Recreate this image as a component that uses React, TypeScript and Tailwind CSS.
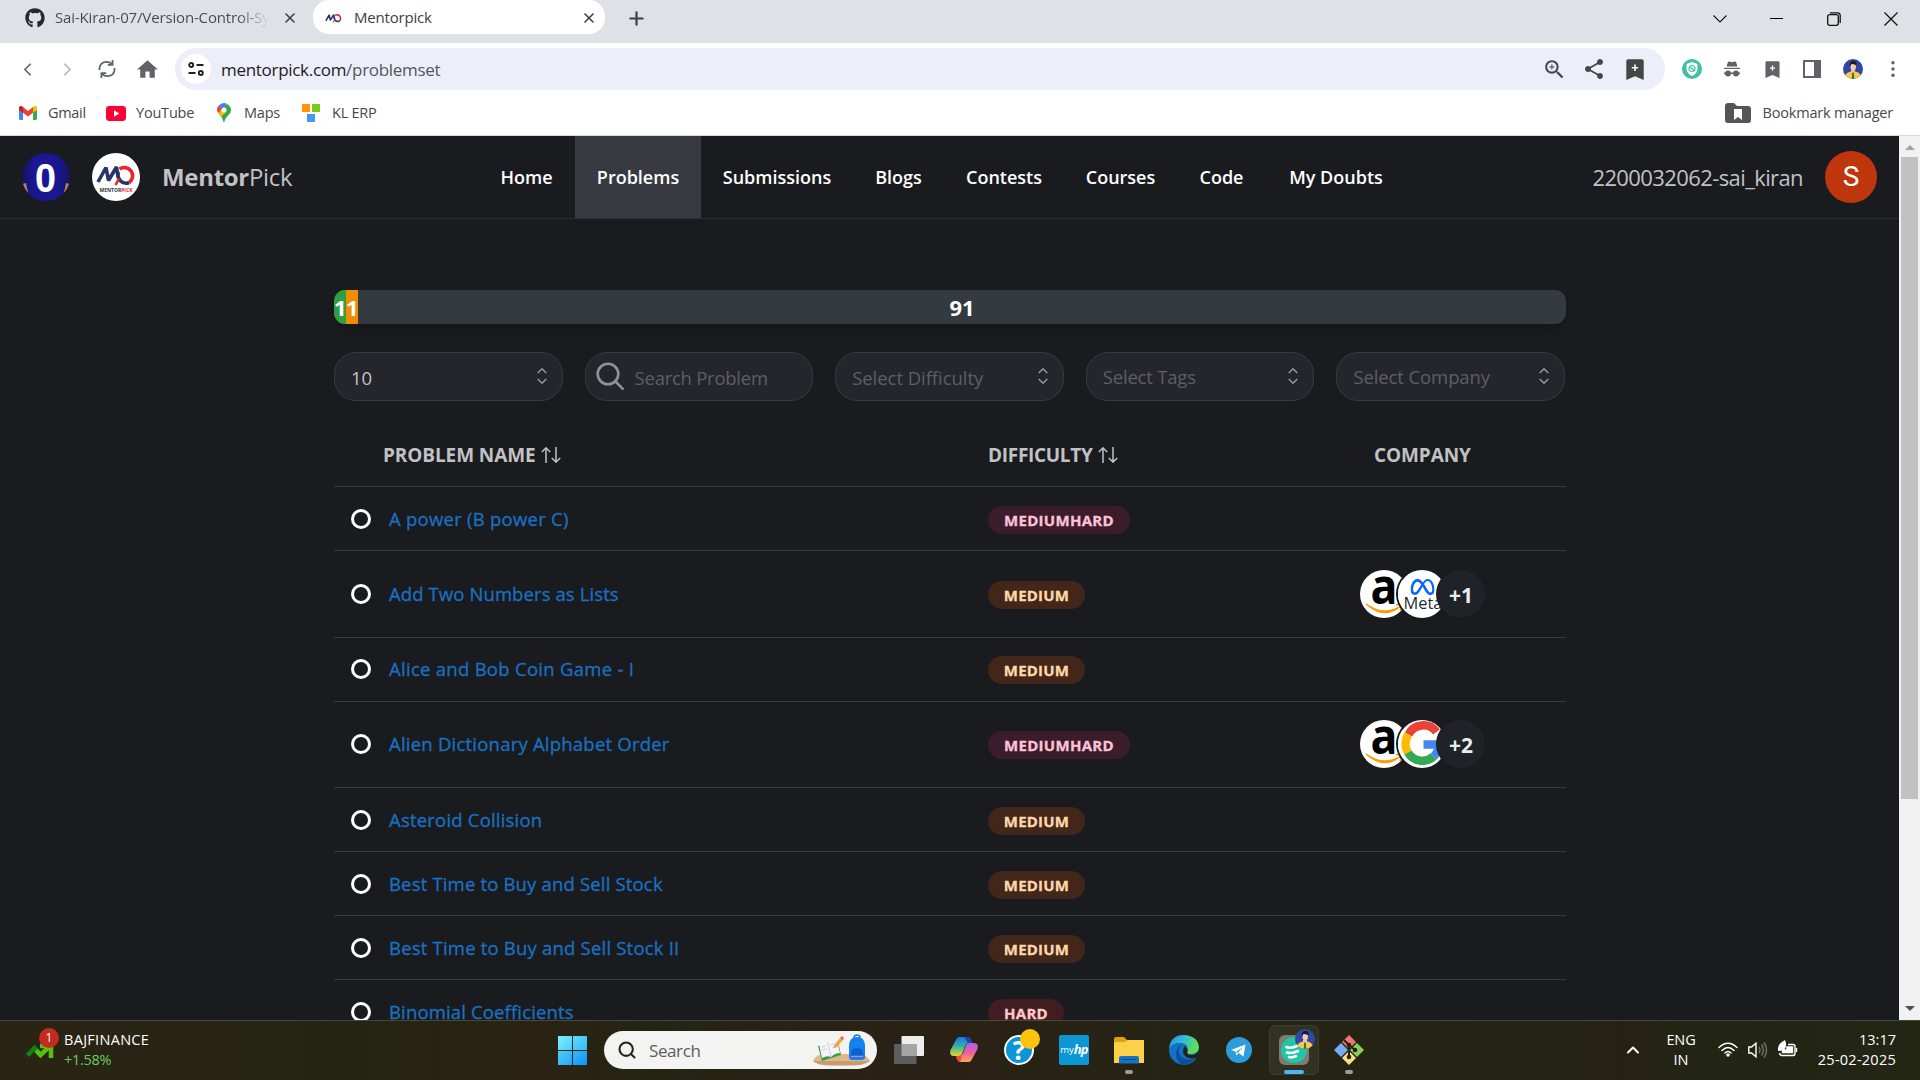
import React from "react";
import { FaGithub } from "react-icons/fa";
import { SiMeta } from "react-icons/si";
import { MdHome, MdShare, MdZoomIn } from "react-icons/md";
import { X, Plus, ChevronLeft, ChevronRight, ChevronUp, Search } from "lucide-react";

type Company = "amazon" | "meta" | "google";
type Level = "MEDIUM" | "MEDIUMHARD" | "HARD";

interface Problem {
  name: string;
  level: Level;
  companies?: Company[];
  more?: string;
  layout: string;
  track: string;
}

const problems: Problem[] = [
  { name: "A power (B power C)", level: "MEDIUMHARD", layout: "h-[64px]", track: "tracking-[0.25px]" },
  { name: "Add Two Numbers as Lists", level: "MEDIUM", companies: ["amazon", "meta"], more: "+1", layout: "h-[87px]", track: "tracking-[0.1px]" },
  { name: "Alice and Bob Coin Game - I", level: "MEDIUM", layout: "h-[64px] pb-px", track: "tracking-[0.28px]" },
  { name: "Alien Dictionary Alphabet Order", level: "MEDIUMHARD", companies: ["amazon", "google"], more: "+2", layout: "h-[86px] pb-px", track: "tracking-[0.22px]" },
  { name: "Asteroid Collision", level: "MEDIUM", layout: "h-[64px]", track: "tracking-[0.2px]" },
  { name: "Best Time to Buy and Sell Stock", level: "MEDIUM", layout: "h-[64px]", track: "tracking-[0.17px]" },
  { name: "Best Time to Buy and Sell Stock II", level: "MEDIUM", layout: "h-[64px]", track: "tracking-[0.2px]" },
  { name: "Binomial Coefficients", level: "HARD", layout: "h-[64px]", track: "tracking-[0.15px]" },
];

const badgeStyle: Record<Level, string> = {
  MEDIUM: "bg-[#42261a] text-[#ffd8a8] w-[97px] tracking-[0.2px]",
  MEDIUMHARD: "bg-[#3b1c2a] text-[#fcc2d7] w-[142px] tracking-[0.3px]",
  HARD: "bg-[#411d22] text-[#ffc9c9] w-[76px] tracking-[0.3px]",
};

const navItems = [
  { label: "Home", width: "w-[97px]" },
  { label: "Problems", width: "w-[126px]" },
  { label: "Submissions", width: "w-[152px]" },
  { label: "Blogs", width: "w-[91px]" },
  { label: "Contests", width: "w-[120px]" },
  { label: "Courses", width: "w-[113px]" },
  { label: "Code", width: "w-[89px]" },
  { label: "My Doubts", width: "w-[140px]" },
];

function MoLogo({ className }: { className: string }) {
  return (
    <svg viewBox="0 0 40 22" className={className} fill="none">
      <path d="M2 18 L10 3.500 L12.500 16.500 L20.500 3 L22 13" stroke="#27346b" strokeWidth="3.600" strokeLinejoin="bevel" />
      <path d="M23.500 5 A8.300 8.300 0 1 1 33 18.700" stroke="#e5262d" strokeWidth="3.600" />
      <path d="M22.500 8 A8.300 8.300 0 0 0 33 18.700" stroke="#27346b" strokeWidth="3.600" />
      <path d="M19.500 21 L23 14.500" stroke="#e5262d" strokeWidth="2.600" />
    </svg>
  );
}

function Person({ className }: { className: string }) {
  return (
    <svg viewBox="0 0 20 20" className={className}>
      <defs>
        <clipPath id="person-clip"><circle cx="10" cy="10" r="10" /></clipPath>
      </defs>
      <g clipPath="url(#person-clip)">
        <rect width="20" height="20" fill="#3048a5" />
        <path d="M1 20 Q2 13 8 12.5 H12 Q18 13 19 20Z" fill="#fbc94a" />
        <path d="M8 11 H12 V13 L10 15 L8 13Z" fill="#f0c1a0" />
        <ellipse cx="10.2" cy="7.5" rx="2.8" ry="4" fill="#f3cbb0" />
        <path d="M6.8 8 Q6 2 10.5 1.8 Q14.5 2.2 13.4 6.5 Q11 4.5 8.5 5Z" fill="#1c1c22" />
        <path d="M9.2 13.5 H10.8 L11.3 20 H8.7Z" fill="#35733b" />
      </g>
    </svg>
  );
}

function TabStrip() {
  return (
    <div className="flex h-[43px] bg-[#dee1e6] text-[#3c4043]">
      <div className="flex h-[35px] w-[313px] items-center pl-[25px]">
        <FaGithub className="size-5 text-[#24292f]" />
        <div className="ml-[10px] w-[214px] overflow-hidden whitespace-nowrap bg-gradient-to-r from-[#45494d] from-85% to-[#dee1e6] bg-clip-text text-[15px] tracking-[-0.15px] text-transparent">
          Sai-Kiran-07/Version-Control-System
        </div>
        <X className="ml-[13px] size-4" strokeWidth={2.4} />
      </div>
      <div className="flex h-[34px] w-[292px] items-center rounded-[16px] bg-white pl-3 pt-px">
        <MoLogo className="h-[12px] w-[17px]" />
        <div className="ml-3 w-[227px] text-[15px] tracking-[-0.2px]">Mentorpick</div>
        <X className="size-4" strokeWidth={2.4} />
      </div>
      <Plus className="ml-[21px] mt-[8px] size-[21px]" strokeWidth={2.5} />
      <div className="ml-auto flex h-[37px] items-center text-[#111]">
        <svg viewBox="0 0 14 8" className="mr-[43px] h-2 w-[14px]" fill="none" stroke="currentColor" strokeWidth="1.1"><path d="M.5.5 7 7 13.5.5" /></svg>
        <div className="mr-[44px] h-px w-[13px] bg-black" />
        <svg viewBox="0 0 14 14" className="mr-[43px] size-[14px]" fill="none" stroke="currentColor" strokeWidth="1.3"><rect x=".7" y="2.7" width="10.6" height="10.6" rx="2" /><path d="M3 .8 H10.5 Q13.2 .8 13.2 3.5 V11" /></svg>
        <svg viewBox="0 0 14 14" className="mr-[22px] size-[14px]" stroke="currentColor" strokeWidth="1.3"><path d="M.5.5 13.5 13.5 M13.5.5 .5 13.5" /></svg>
      </div>
    </div>
  );
}

function BookmarkPlus({ className }: { className: string }) {
  return (
    <svg viewBox="0 0 18 21" className={className}>
      <path d="M2 .2 H16 Q17.7 .2 17.7 2 V21 L9 17.2 L.3 21 V2 Q.3 .2 2 .2Z" fill="currentColor" />
      <path d="M9 5.5 V12 M5.8 8.7 H12.2" stroke="#fff" strokeWidth="1.6" />
    </svg>
  );
}

function Toolbar() {
  return (
    <div className="flex h-[52px] items-center bg-white text-[#5f6368]">
      <ChevronLeft className="ml-[17px] size-[21px]" strokeWidth={2} />
      <ChevronRight className="ml-[19px] size-[21px] text-[#b4b6b8]" strokeWidth={2} />
      <svg viewBox="0 0 20 20" className="ml-[19px] size-[20px]" fill="none" stroke="currentColor" strokeWidth="1.8">
        <path d="M2.5 11 V9 Q3 3.5 9 2.8 Q12.5 2.6 15 5 M15.6 1 V5.8 H10.8" />
        <path d="M17.5 9 V11 Q17 16.5 11 17.2 Q7.5 17.4 5 15 M4.4 19 V14.2 H9.2" />
      </svg>
      <MdHome className="ml-[18px] size-[25px]" />
      <div className="ml-[15px] flex h-[42px] w-[1490px] items-center rounded-full bg-[#eceef9] text-[#444746]">
        <div className="ml-[6px] flex size-[30px] items-center justify-center rounded-full bg-white">
          <svg viewBox="0 0 16 14" className="h-[14px] w-4" fill="none" stroke="#202124" strokeWidth="1.9">
            <circle cx="3.2" cy="3" r="2" /><path d="M8.5 3 H15.5 M.5 11 H7.5" /><circle cx="12.8" cy="11" r="2" />
          </svg>
        </div>
        <div className="ml-[10px] pt-px text-[17px] tracking-[-0.3px]">
          <span className="text-[#1f2023]">mentorpick.com</span><span className="text-[#54575b]">/problemset</span>
        </div>
        <MdZoomIn className="ml-auto size-[25px]" />
        <MdShare className="ml-[15px] size-[24px]" />
        <BookmarkPlus className="ml-[20px] mr-[21px] h-[21px] w-[18px]" />
      </div>
      <svg viewBox="0 0 20 20" className="ml-[17px] size-[20px]">
        <circle cx="10" cy="10" r="10" fill="#3fc0a6" />
        <path d="M4.5 5 L10 3 L15.5 5 V10 Q15 14.5 10 17 Q5 14.5 4.5 10Z" fill="#fff" />
        <circle cx="10" cy="9.5" r="3" fill="none" stroke="#3fc0a6" strokeWidth="1.2" /><path d="M8 7.5 L12 11.5" stroke="#3fc0a6" strokeWidth="1.2" />
      </svg>
      <svg viewBox="0 0 18 16" className="ml-[21px] h-4 w-[18px]" fill="currentColor">
        <path d="M5 1 Q5.5 .2 6.5 .6 L9 1.2 L11.5 .6 Q12.5 .2 13 1 L14.5 5.5 H3.5Z" /><path d="M1 6.8 H17 V8 H1Z" />
        <circle cx="5" cy="12.5" r="3" /><circle cx="13" cy="12.5" r="3" /><path d="M1 11.5 H17 V13 H1Z" />
      </svg>
      <BookmarkPlus className="ml-[24px] h-[17px] w-[15px]" />
      <svg viewBox="0 0 18 18" className="ml-[23px] size-[18px]" fill="none" stroke="currentColor" strokeWidth="2"><rect x="1" y="1" width="16" height="16" /><path d="M12 1 H17 V17 H12Z" fill="currentColor" /></svg>
      <Person className="ml-[22px] size-[20px]" />
      <svg viewBox="0 0 4 16" className="ml-[28px] h-4 w-1" fill="currentColor"><circle cx="2" cy="1.8" r="1.7" /><circle cx="2" cy="8" r="1.7" /><circle cx="2" cy="14.2" r="1.7" /></svg>
    </div>
  );
}

function BookmarksBar() {
  return (
    <div className="flex h-[41px] items-center border-b border-[#d5d9dc] bg-white pb-[4px] text-[14.5px] text-[#45484c]">
      <svg viewBox="0 0 18 14" className="ml-[19px] h-[14px] w-[18px]">
        <path d="M0 2 V12.5 Q0 14 1.5 14 H4 V5Z" fill="#4285f4" /><path d="M14 5 V14 H16.5 Q18 14 18 12.5 V2Z" fill="#34a853" />
        <path d="M4 1 V6.8 L9 10.5 L14 6.8 V1 L9 5Z" fill="#ea4335" /><path d="M0 2 Q.3 -.8 3 .3 L4 1 V6.8 L0 4Z" fill="#c5221f" /><path d="M18 2 Q17.7 -.8 15 .3 L14 1 V6.8 L18 4Z" fill="#fbbc04" />
      </svg>
      <span className="ml-[11px] w-[58px] tracking-[-0.3px]">Gmail</span>
      <svg viewBox="0 0 20 14" className="h-[15px] w-5" preserveAspectRatio="none"><rect width="20" height="14" rx="3.2" fill="#f03" /><path d="M8 4 L13.3 7 L8 10Z" fill="#fff" /></svg>
      <span className="ml-[10px] w-[81px] tracking-[-0.2px]">YouTube</span>
      <svg viewBox="0 0 14 20" className="h-5 w-[14px]">
        <path d="M7 20 Q6 15 2.5 11.5 Q0 8.5 0 6.5 L10 1 Q14 3 14 7 Q14 9.500 11.500 12 Q8 15 7 20Z" fill="#34a853" />
        <path d="M1.400 3 L5 6.300 L9.800 .6 Q5 -1.200 1.400 3Z" fill="#4285f4" /><path d="M1.400 2.800 L5 6 L1.300 10 Q-1.200 6 1.400 2.800Z" fill="#ea4335" />
        <path d="M1.300 10 L5 5.800 L9 9 L4 14Z" fill="#fbbc04" /><circle cx="7" cy="6.900" r="2.500" fill="#fff" />
      </svg>
      <span className="ml-[13px] w-[58px] tracking-[-0.2px]">Maps</span>
      <div className="grid h-[18px] w-[18px] grid-cols-2 gap-x-[2px] gap-y-[2px]">
        <div className="bg-[#ff9500]" /><div className="bg-[#77cc12]" /><div className="col-span-2 mx-[5px] bg-[#4299f5]" />
      </div>
      <span className="ml-[12px] tracking-[-0.25px]">KL ERP</span>
      <svg viewBox="0 0 26 20" className="ml-auto h-5 w-[26px]">
        <path d="M3 0 H9 L12 3 H23 Q26 3 26 6 V17 Q26 20 23 20 H3 Q0 20 0 17 V3 Q0 0 3 0Z" fill="#555" /><path d="M9 6 H17 V17 L13 14 L9 17Z" fill="#fff" />
      </svg>
      <span className="ml-[12px] mr-[27px] tracking-[-0.2px]">Bookmark manager</span>
    </div>
  );
}

function Header() {
  return (
    <header className="flex h-[83px] items-center border-b border-[#2c2e33] text-[#c1c2c5]">
      <div className="ml-[22px] flex size-[48px] items-center justify-center overflow-hidden rounded-full bg-[linear-gradient(90deg,#15135f,#1a1793_25%,#1a1793_75%,#15135f)]">
        <svg viewBox="0 0 48 48" className="size-full">
          <path d="M0 31 L4 30 L8 48 L0 48Z M48 31 L44 30 L40 48 L48 48Z" fill="#b27d66" />
          <text x="23.500" y="38.500" textAnchor="middle" fontSize="40" fontWeight="700" fontFamily="Liberation Sans" fill="#fff" textLength="21" lengthAdjust="spacingAndGlyphs">0</text>
        </svg>
      </div>
      <div className="ml-[22px] flex size-[48px] flex-col items-center justify-center rounded-full bg-white">
        <MoLogo className="mt-1 h-[22px] w-[40px]" />
        <div className="text-[5px] font-bold leading-[8px] text-[#333]">MENTOR<span className="text-[#e5262d]">PICK</span></div>
      </div>
      <div className="ml-[22px] w-[316px] text-[24px] tracking-[-0.3px]"><b>Mentor</b>Pick</div>
      <nav className="flex h-full text-[18px] font-semibold text-white">
        {navItems.map((n) => (
          <a key={n.label} className={`flex items-center justify-center whitespace-nowrap ${n.width} ${n.label === "Problems" ? "bg-[#373a40]" : ""}`}>
            {n.label}
          </a>
        ))}
      </nav>
      <div className="ml-auto text-[22px] tracking-[-0.6px]">2200032062-sai_kiran</div>
      <div className="ml-[22px] mr-[22px] flex size-[52px] items-center justify-center rounded-full bg-[#bf360c] font-[Roboto] text-[28px] text-white">S</div>
    </header>
  );
}

function Updown() {
  return (
    <svg viewBox="0 0 10 16" className="ml-auto mr-[15px] h-4 w-[10px]" fill="none" stroke="#a0a1a5" strokeWidth="1.3"><path d="M.7 5 L5 .8 L9.300 5 M.7 11 L5 15.200 L9.300 11" /></svg>
  );
}

function SortIcon() {
  return (
    <svg viewBox="0 0 20 16" className="ml-[5px] h-4 w-5" fill="none" stroke="#c1c2c5" strokeWidth="1.5"><path d="M5 16 V1 M.8 5 L5 .9 L9.200 5 M15 0 V15 M10.800 11 L15 15.100 L19.200 11" /></svg>
  );
}

function Filters() {
  const box = "flex h-[49px] items-center rounded-[22px] border border-[#373a40] bg-[#25262b] pb-px";
  return (
    <div className="mt-[28px] grid w-[1231px] grid-cols-[repeat(5,minmax(0,1fr))] gap-[22px] whitespace-nowrap text-[18.5px] text-[#5c5f66]">
      <div className={`${box} pl-4`}><span className="pt-[4px] text-[#c1c2c5]">10</span><Updown /></div>
      <div className={`${box} pl-[10px]`}>
        <svg viewBox="0 0 28 28" className="size-7" fill="none" stroke="#909296" strokeWidth="2.600"><circle cx="12" cy="12" r="10.300" /><path d="M19 19 L27.500 27.500" /></svg>
        <span className="ml-[11px] pt-[4px] tracking-[-0.25px]">Search Problem</span>
      </div>
      <div className={`${box} pl-4`}><span className="pt-[4px] tracking-[-0.05px]">Select Difficulty</span><Updown /></div>
      <div className={`${box} pl-4`}><span className="pt-[2px] tracking-[-0.2px]">Select Tags</span><Updown /></div>
      <div className={`${box} pl-4`}><span className="pt-[2px] tracking-[-0.1px]">Select Company</span><Updown /></div>
    </div>
  );
}

function CompanyAvatar({ kind }: { kind: Company }) {
  return (
    <svg viewBox="0 0 48 48" className="size-[48px] rounded-full bg-white">
      {kind === "amazon" && (
        <g>
          <text x="24" y="33.500" textAnchor="middle" fontFamily="Open Sans" fontWeight="700" fontSize="50" fill="#000" textLength="27" lengthAdjust="spacingAndGlyphs">a</text>
          <path d="M6 34 Q23 46.500 40 36.500 Q24 50 6 34Z" fill="#ff9900" stroke="#ff9900" strokeWidth="1.200" />
          <path d="M36 35 Q40 33.500 42 35 Q42 38 40 41" fill="none" stroke="#ff9900" strokeWidth="1.600" />
        </g>
      )}
      {kind === "meta" && (
        <g>
          <SiMeta x="12.500" y="5" size={24} color="#0866ff" />
          <text x="5.500" y="38.500" fontFamily="Open Sans" fontSize="15.500" fontWeight="500" fill="#1c2b33" textLength="39" lengthAdjust="spacingAndGlyphs">Meta</text>
        </g>
      )}
      {kind === "google" && (
        <g fill="none" strokeWidth="8.500">
          <path d="M38.500 12 A16.500 16.500 0 0 0 10.500 14.500" stroke="#ea4335" />
          <path d="M10.500 14.500 A16.500 16.500 0 0 0 10 32.500" stroke="#fbbc05" />
          <path d="M10 32.500 A16.500 16.500 0 0 0 35.500 36.500" stroke="#34a853" />
          <path d="M35.500 36.500 A16.500 16.500 0 0 0 41 24.500 H25.500" stroke="#4285f4" />
        </g>
      )}
    </svg>
  );
}

function ProblemTable() {
  return (
    <div className="mt-[34px]">
      <div className="flex h-[52px] border-b border-[#373a40] pb-[15px] pt-[4px] text-[19px] font-bold leading-[30px] text-[#c1c2c5]">
        <div className="flex w-[654px] items-center pl-[49px]"><span className="tracking-[-0.1px]">PROBLEM NAME</span><SortIcon /></div>
        <div className="flex w-[386px] items-center"><span className="tracking-[-0.3px]">DIFFICULTY</span><SortIcon /></div>
        <div className="flex items-center tracking-[-0.1px]">COMPANY</div>
      </div>
      {problems.map((p) => (
        <div key={p.name} className={`flex items-center border-b border-[#373a40] ${p.layout}`}>
          <div className="ml-[17px] size-[20px] rounded-full border-3 border-white" />
          <div className={`ml-[18px] w-[599px] whitespace-nowrap text-[18.5px] font-medium text-[#1971c2] [-webkit-text-stroke:0.3px] ${p.track}`}>{p.name}</div>
          <div className={`mt-[2px] flex h-[28px] items-center justify-center rounded-full pt-px text-[15px] font-bold [-webkit-text-stroke:0.3px] ${badgeStyle[p.level]}`}>{p.level}</div>
          {p.companies && (
            <div className={`flex ${p.level === "MEDIUM" ? "ml-[275px]" : "ml-[230px]"}`}>
              <CompanyAvatar kind={p.companies[0]} />
              <div className="-ml-[10px] size-[48px] rounded-full shadow-[0_0_0_2px_#1a1b1e]"><CompanyAvatar kind={p.companies[1]} /></div>
              <div className="-ml-[9px] flex size-[48px] items-center justify-center rounded-full bg-[#1f2327] pt-[4px] text-[21px] font-bold text-[#e9ecef] shadow-[0_0_0_1px_#1a1b1e]">{p.more}</div>
            </div>
          )}
        </div>
      ))}
    </div>
  );
}

function Scrollbar() {
  return (
    <div className="flex w-[21px] flex-col items-center bg-[#f1f1f1]">
      <div className="mt-[9px] border-x-[5px] border-b-[5px] border-x-transparent border-b-[#a3a3a3]" />
      <div className="mt-[7px] h-[642px] w-[17px] bg-[#c1c1c1]" />
      <div className="mb-[9px] mt-auto border-x-[5px] border-t-[5px] border-x-transparent border-t-[#505050]" />
    </div>
  );
}

function Taskbar() {
  return (
    <footer className="flex h-[60px] border-t border-[#47473b] bg-[linear-gradient(90deg,#2a2414,#252413_18%,#2a2314_28%,#252413_34%,#2a2115_48%,#252414_62%,#242415_82%,#272014_84%,#222514_88%,#242614)] text-white">
      <div className="relative ml-[26px] w-[28px]">
        <svg viewBox="0 0 28 16" className="mt-[22px] h-[16px] w-[28px]" fill="none">
          <path d="M1.500 12.500 L8.500 5 L13.500 10" stroke="#158018" strokeWidth="4.500" /><path d="M10 7.500 L14.500 12 L23 4 M14 3 H25 V15" stroke="#59bf10" strokeWidth="4.500" />
        </svg>
        <div className="absolute left-[13px] top-[7px] flex size-[20px] items-center justify-center rounded-full bg-[#c42b1c] text-[12px]">1</div>
      </div>
      <div className="ml-[10px] w-[494px] pt-[9px] text-[14.500px] leading-[20px]">
        <div className="tracking-[0.300px]">BAJFINANCE</div>
        <div className="tracking-[-0.300px] text-[#6ccb5f]">+1.58%</div>
      </div>
      <div className="mt-[15px] grid size-[29px] grid-cols-2 gap-px">
        <div className="bg-gradient-to-br from-[#7bf0ff] to-[#4fcdf9]" /><div className="bg-gradient-to-br from-[#5cdcfb] to-[#37b9f8]" />
        <div className="bg-gradient-to-br from-[#4fcdf9] to-[#25a5f8]" /><div className="bg-gradient-to-br from-[#37b9f8] to-[#0a93fa]" />
      </div>
      <div className="ml-[17px] mt-[10px] flex h-[38px] w-[273px] items-center rounded-full bg-[#f3f3f1] text-[17px] text-[#5d5d5b]">
        <Search className="ml-[13px] size-[20px] text-[#222]" strokeWidth={2.5} />
        <span className="ml-[12px] pt-[2px] tracking-[-0.4px]">Search</span>
        <svg viewBox="0 0 57 32" className="ml-auto mr-[7px] h-8 w-[57px]">
          <path d="M0 27 Q3 20 12 20 H50 Q56 24 57 27 Q50 31 40 31 H18 Q5 31 0 27Z" fill="#e0b78c" /><path d="M0 27 H57 Q50 31.500 40 31.500 H18 Q5 31.500 0 27Z" fill="#c99b70" />
          <path d="M5 12 L25 7 L28 21 L9 27Z" fill="#3a9d4d" /><path d="M6 10 Q11 7 15 10 Q19 5 24 6 L27 19 Q22 19 18 23 Q14 21 9 24Z" fill="#f7f3fb" /><path d="M15 10 L18 23 M8 13 L13 12 M9 16 L14 15 M18 11 L23 9 M19 14 L24 12" stroke="#c9c3d8" strokeWidth=".8" />
          <path d="M20 13 L27 4 L30 6 L23 14Z" fill="#f4a33c" /><path d="M27 4 L29 2 L31 4 L30 6Z" fill="#ef5b4c" />
          <path d="M41 4 Q41 1 44 1 Q47 1 47 4" fill="none" stroke="#1778d8" strokeWidth="1.500" /><path d="M36 12 Q36 3 44 3 Q52 3 52 12 V23 Q52 26 49 26 H39 Q36 26 36 23Z" fill="#1282ee" /><path d="M38 19 Q38 14 44 14 Q50 14 50 19 V24 H38Z" fill="#0c62cc" /><path d="M38 22.500 H50" stroke="#b58cff" strokeWidth="1.500" />
        </svg>
      </div>
      <svg viewBox="0 0 30 28" className="ml-[17px] mt-[15px] h-7 w-[30px]"><rect x="7.500" width="22.500" height="20" rx="1" fill="#ededed" /><rect y="8" width="22.500" height="20" rx="1" fill="#5d5d5d" /><path d="M7.500 8 H22.500 V20 H7.500Z" fill="#a5a5a5" /></svg>
      <svg viewBox="0 0 28 25" className="ml-[26px] mt-[16px] h-[25px] w-7">
        <defs>
          <linearGradient id="cp1" x1="0" y1="0" x2="0" y2="1"><stop offset="0" stopColor="#1a74e8" /><stop offset=".5" stopColor="#2fb8a0" /><stop offset="1" stopColor="#f0d32c" /></linearGradient>
          <linearGradient id="cp2" x1="0" y1="0" x2="0" y2="1"><stop offset="0" stopColor="#a066f5" /><stop offset=".5" stopColor="#ee5c9c" /><stop offset="1" stopColor="#ffa45c" /></linearGradient>
        </defs>
        <path d="M7 1 Q8 0 10 0 H18 Q20 0 21 3 L22 6 H18 Q16 6 15 9 L12 17 Q11 19 9 19 H4 Q-1 19 .5 13Z" fill="url(#cp1)" />
        <path d="M21 24 Q20 25 18 25 H10 Q8 25 7 22 L6 19 H10 Q12 19 13 16 L16 8 Q17 6 19 6 H24 Q29 6 27.500 12Z" fill="url(#cp2)" />
        <path d="M14 0 H18 Q20 0 21 3 L22 6 H18Z" fill="#1746b8" /><path d="M6 19 H10 Q12 19 11 23 L10 25 Q8 25 7 22Z" fill="#ee4b35" />
      </svg>
      <div className="relative ml-[26px] mt-[14px] flex size-[30px] items-center justify-center rounded-full border-2 border-white bg-[#0b94d8] text-[26px] font-bold">
        ?
        <div className="absolute -top-[8px] left-[14px] size-[20px] rounded-full bg-[#ffc20e]" />
      </div>
      <div className="ml-[25px] mt-[14px] flex size-[30px] items-center justify-center rounded-[2px] bg-[#0b96d6] text-[9.5px]">my<i className="text-[13px] font-bold tracking-[-0.8px]">hp</i></div>
      <div className="ml-[25px] mt-[16px] flex w-[30px] flex-col items-center">
        <svg viewBox="0 0 30 27" className="h-[27px] w-[30px]"><path d="M0 2 Q0 0 2 0 H10 L13 3 V8 H0Z" fill="#e0a010" /><path d="M0 5 H11 L13.500 3 H30 V26 H0Z" fill="#fdd048" /><path d="M5 26.500 V21 Q5 19 7 19 H23 Q25 19 25 21 V26.500Z" fill="#1573c4" /><path d="M8 22.500 H22" stroke="#0a4a8a" strokeWidth="1" /></svg>
        <div className="mt-[6px] h-1 w-2 rounded-full bg-[#9d9d98]" />
      </div>
      <svg viewBox="0 0 30 30" className="ml-[25px] mt-[14px] size-[30px]">
        <defs><linearGradient id="edge" x1="0" y1="0" x2="1" y2=".3"><stop offset="0" stopColor="#2292dc" /><stop offset=".5" stopColor="#30bcdc" /><stop offset="1" stopColor="#5fe050" /></linearGradient></defs>
        <circle cx="15" cy="15" r="15" fill="#1370c4" />
        <path d="M0 13 Q2 0 15 0 Q29 1 30 12 Q29 20 20 19 Q17 18 19 15 Q19 9 13 8 Q5 7 0 13Z" fill="url(#edge)" />
        <path d="M13 10 Q9 13 10 18 Q13 27 26 23.500 Q22 30 15 30 Q7 28 7 18 Q8 11 13 10Z" fill="#0d4f9c" />
        <path d="M19 15 Q17 18 19.500 19.500 Q26 21 30.500 15 L28.500 23 Q18 25 14.500 19 Q13 14 16 11Z" fill="#252413" />
      </svg>
      <svg viewBox="0 0 26 26" className="ml-[27px] mt-[16px] size-[26px]"><circle cx="13" cy="13" r="13" fill="#2a9ddb" /><path d="M5 13 L19.500 7.500 L17.500 19.500 L12.500 16 L10.500 18.500 L9.500 14.500Z" fill="#fff" /><path d="M10 15 L17 10 L11.500 16Z" fill="#2a9ddb" /></svg>
      <div className="relative ml-[17px] mt-[4px] flex h-[50px] w-[50px] flex-col items-center rounded-[6px] border border-[#3d3d2f] bg-[#323223]">
        <div className="mt-[9px] size-[30px] rounded-[6px] bg-[#7d7c72]">
          <svg viewBox="0 0 30 30" className="size-[30px]"><circle cx="15" cy="15" r="13" fill="#20c7a5" /><path d="M7.500 12 Q12 14 19 10.500 M8 17.500 Q13 19 19 16 M10 22 Q13 23 17 21" stroke="#fff" strokeWidth="2.600" fill="none" strokeLinecap="round" /></svg>
        </div>
        <div className="mt-[5px] h-1 w-5 rounded-full bg-[#4cb5f5]" />
        <Person className="absolute left-[25px] top-[3px] size-[20px]" />
      </div>
      <div className="ml-[14px] mt-[14px] flex w-[31px] flex-col items-center">
        <svg viewBox="0 0 30 30" className="size-[30px]">
          <path d="M15 0 L22 7 L15 14 L8 7Z" fill="#f27474" /><path d="M23 8 L30 15 L23 22 L16 15Z" fill="#8ccb5e" /><path d="M7 8 L14 15 L7 22 L0 15Z" fill="#7aaaf5" /><path d="M15 16 L22 23 L15 30 L8 23Z" fill="#fbe07c" />
          <path d="M10 5 L15 10 V23 M15 10 L21 15" stroke="#252413" strokeWidth="2" fill="none" /><circle cx="15" cy="10" r="2.300" fill="#252413" /><circle cx="21" cy="15" r="2.300" fill="#252413" /><circle cx="15" cy="22" r="2.300" fill="#252413" />
        </svg>
        <div className="mt-[5px] h-1 w-2 rounded-full bg-[#9d9d98]" />
      </div>
      <div className="ml-auto flex text-[14.500px] leading-[20px]">
        <ChevronUp className="mt-[19px] size-[20px]" strokeWidth={2.4} />
        <div className="ml-[20px] w-[36px] pt-[9px] text-center tracking-[-0.100px]">ENG<br />IN</div>
        <svg viewBox="0 0 20 15" className="ml-[19px] mt-[21px] h-[15px] w-5" fill="none" stroke="#fff" strokeWidth="1.500" strokeLinecap="round"><path d="M1 5.500 Q10 -3 19 5.500 M4 8.500 Q10 2.500 16 8.500 M7 11 Q10 8 13 11" /><circle cx="10" cy="13" r="1" fill="#fff" /></svg>
        <svg viewBox="0 0 20 18" className="ml-[10px] mt-[20px] h-[18px] w-5" fill="none" stroke="#fff" strokeWidth="1.400"><path d="M.8 6 H3.500 L8 2.200 V15.800 L3.500 12 H.8Z" /><path d="M11 6 Q13 9 11 12 M13.500 3.500 Q17 9 13.500 14.500 M16 1.500 Q21 9 16 16.500" stroke="#74746a" /></svg>
        <svg viewBox="0 0 20 17" className="ml-[10px] mt-[19px] h-[17px] w-5" fill="none" stroke="#fff" strokeWidth="1.400"><path d="M10 4.500 H15 Q17 4.500 17 6.500 V13 Q17 15.500 15 15.500 H4 Q2 15.500 1.500 13" /><path d="M4.500 12.500 V10 H9 V7 H14.500 V12.500Z M18.500 8 V12" fill="#fff" /><path d="M0 11 Q-1 4 7 0 Q10 7 5 10.500Z" fill="#fff" stroke="none" /></svg>
        <div className="ml-[12px] mr-[24px] w-[86px] whitespace-nowrap pt-[9px] text-right"><div>13:17</div><div className="tracking-[0.250px]">25-02-2025</div></div>
      </div>
    </footer>
  );
}

export default function App() {
  return (
    <div className="flex h-[1080px] w-[1920px] flex-col overflow-hidden bg-[#1a1b1e] font-['Open_Sans',sans-serif]">
      <TabStrip />
      <Toolbar />
      <BookmarksBar />
      <div className="flex h-[884px]">
        <main className="w-[1899px] overflow-hidden">
          <Header />
          <section className="ml-[334px] mt-[71px] w-[1232px]">
            <div className="flex h-[34px] overflow-hidden rounded-[11px] bg-[#353940] text-center text-[22px] font-bold leading-[34px] text-white shadow-lg">
              <div className="w-[12px] bg-[#2f9e44]">1</div>
              <div className="w-[12px] bg-[#f08c00]">1</div>
              <div className="flex-1">91</div>
            </div>
            <Filters />
            <ProblemTable />
          </section>
        </main>
        <Scrollbar />
      </div>
      <Taskbar />
    </div>
  );
}
